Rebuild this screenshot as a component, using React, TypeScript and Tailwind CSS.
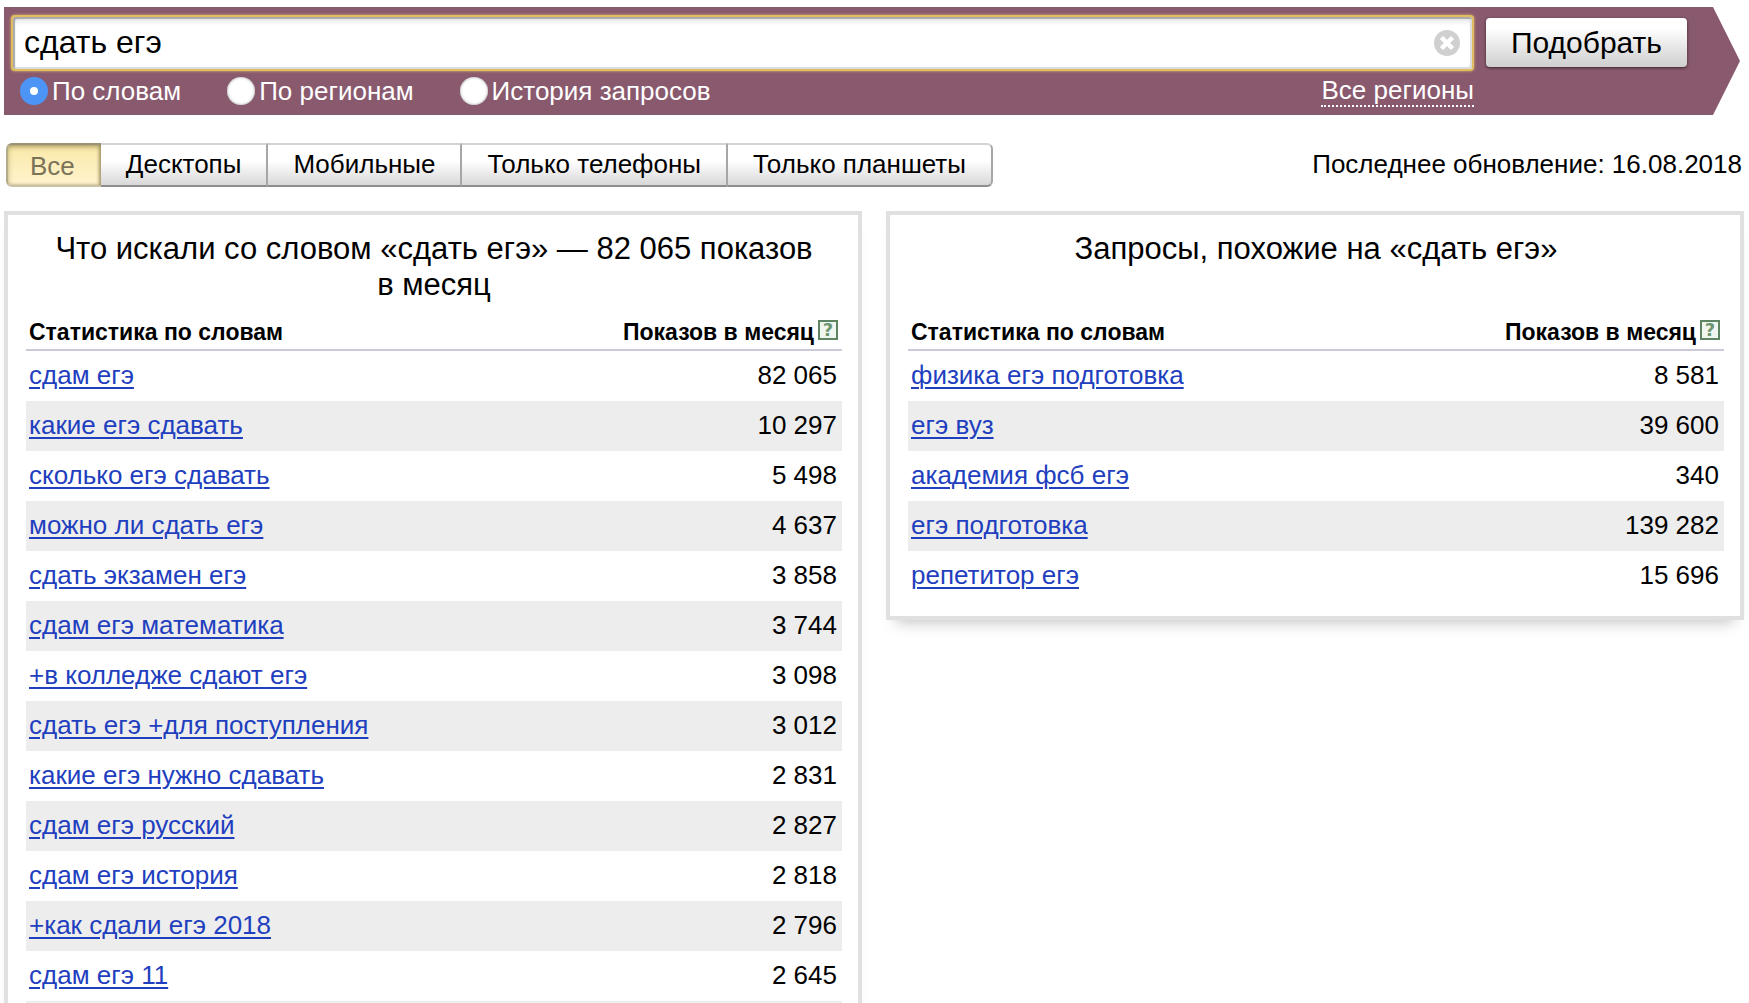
import React, { useState } from "react";

type Row = { query: string; shows: string };

const devices = ["Все", "Десктопы", "Мобильные", "Только телефоны", "Только планшеты"];
const modes = ["По словам", "По регионам", "История запросов"];

const searched: Row[] = [
  { query: "сдам егэ", shows: "82 065" },
  { query: "какие егэ сдавать", shows: "10 297" },
  { query: "сколько егэ сдавать", shows: "5 498" },
  { query: "можно ли сдать егэ", shows: "4 637" },
  { query: "сдать экзамен егэ", shows: "3 858" },
  { query: "сдам егэ математика", shows: "3 744" },
  { query: "+в колледже сдают егэ", shows: "3 098" },
  { query: "сдать егэ +для поступления", shows: "3 012" },
  { query: "какие егэ нужно сдавать", shows: "2 831" },
  { query: "сдам егэ русский", shows: "2 827" },
  { query: "сдам егэ история", shows: "2 818" },
  { query: "+как сдали егэ 2018", shows: "2 796" },
  { query: "сдам егэ 11", shows: "2 645" },
  { query: "", shows: "" },
];

const similar: Row[] = [
  { query: "физика егэ подготовка", shows: "8 581" },
  { query: "егэ вуз", shows: "39 600" },
  { query: "академия фсб егэ", shows: "340" },
  { query: "егэ подготовка", shows: "139 282" },
  { query: "репетитор егэ", shows: "15 696" },
];

function Panel({ title, rows }: { title: string; rows: Row[] }) {
  return (
    <section className="border-4 border-[#e0e0e0] bg-white pt-4 pr-4 pb-[15px] pl-[18px] shadow-[0_12px_14px_-10px_rgba(0,0,0,0.25)]">
      <h2 className="mx-auto min-h-[72px] max-w-[780px] text-center text-[31px] leading-9">{title}</h2>
      <table className="mt-3 w-full border-separate border-spacing-0">
        <thead>
          <tr className="text-[23px] leading-[34px]">
            <th className="border-b-2 border-[#cccad8] px-[3px] py-0 text-left font-bold">
              Статистика по словам
            </th>
            <th className="border-b-2 border-[#cccad8] py-0 pr-1 pl-0 font-bold">
              <div className="flex items-center justify-end gap-1">
                Показов в месяц
                <button
                  type="button"
                  aria-label="Справка"
                  className="mb-1 flex size-5 items-center justify-center border-2 border-[#5d8564] bg-[#f0f5f0] font-['DejaVu_Sans',sans-serif] text-lg leading-4 font-bold text-[#6c9672]"
                >
                  ?
                </button>
              </div>
            </th>
          </tr>
        </thead>
        <tbody className="text-[26px] leading-[30px]">
          {rows.map((row, i) => (
            <tr key={i} className="h-[50px] even:bg-[#ededed]">
              <td className="px-[3px] pt-0 pb-0.5">
                {row.query && (
                  <a href="#" className="text-[#1f3fbf] underline decoration-2 underline-offset-[3px]">
                    {row.query}
                  </a>
                )}
              </td>
              <td className="pt-0 pr-[5px] pb-0.5 text-right">{row.shows}</td>
            </tr>
          ))}
        </tbody>
      </table>
    </section>
  );
}

export default function App() {
  const [query, setQuery] = useState("сдать егэ");
  const [mode, setMode] = useState(0);
  const [device, setDevice] = useState(0);

  return (
    <div className="h-screen overflow-hidden bg-white pt-[7px] pr-[5px] pl-1 font-['Liberation_Sans',Arial,sans-serif] text-black">
      <header className="mr-1 flex h-[108px] gap-3 bg-[#89596e] pt-2 pr-[53px] pl-[7px] [clip-path:polygon(0_0,calc(100%-27px)_0,100%_50%,calc(100%-27px)_100%,0_100%)]">
        <div className="min-w-0 flex-1">
          <div className="flex h-14 items-center rounded-sm border-2 border-[#e0bd62] bg-white pr-3 shadow-[0_0_3px_#e0bd62,inset_2px_2px_1px_#a8a8a8,inset_-2px_-2px_0_#dcdcdc,inset_0_5px_5px_#e8e8e8]">
            <input
              type="text"
              aria-label="Поисковый запрос"
              value={query}
              onChange={(e) => setQuery(e.target.value)}
              className="min-w-0 flex-1 bg-transparent pb-0.5 pl-[11px] text-[32px] leading-9 outline-none"
            />
            <button type="button" aria-label="Очистить" onClick={() => setQuery("")}>
              <svg viewBox="0 0 26 26" className="size-[26px]">
                <circle cx="13" cy="13" r="13" fill="#d0d0d0" />
                <path d="M7.5 7.5l11 11M18.5 7.5l-11 11" stroke="white" strokeWidth="4.5" />
              </svg>
            </button>
          </div>
          <div className="flex items-center justify-between pt-1 pl-[9px] text-[26px] leading-[30px] text-white">
            <div className="flex gap-[46px]">
              {modes.map((label, i) => (
                <label key={label} className="flex items-center gap-1">
                  <input
                    type="radio"
                    name="mode"
                    checked={mode === i}
                    onChange={() => setMode(i)}
                    className="size-7 appearance-none rounded-full bg-white shadow-[inset_0_0_3px_#9a9a9a] checked:border-[10px] checked:border-[#4c94f6] checked:shadow-none"
                  />
                  {label}
                </label>
              ))}
            </div>
            <a href="#" className="border-b-2 border-dotted border-white">
              Все регионы
            </a>
          </div>
        </div>
        <button
          type="button"
          className="mt-[3px] h-[49px] rounded-sm bg-linear-to-b from-white from-20% to-[#cfcfcf] px-[25px] text-[30px] leading-9 shadow-[0_1px_3px_rgba(0,0,0,0.6)]"
        >
          Подобрать
        </button>
      </header>

      <div className="mt-7 mr-0.5 ml-0.5 flex items-center justify-between text-[26px] leading-[30px]">
        <div className="flex" role="group" aria-label="Устройства">
          {devices.map((label, i) => (
            <button
              key={label}
              type="button"
              aria-pressed={device === i}
              onClick={() => setDevice(i)}
              className={
                device === i
                  ? "h-11 border-2 border-r-0 border-t-[#9a9278] border-b-[#c9c2a4] border-l-[#b3ab8c] bg-linear-to-b from-[#fae9a8] to-[#fff3cd] pt-0.5 pr-[26px] pl-[22px] text-[#7a7358] shadow-[inset_0_2px_5px_rgba(120,105,60,0.5),inset_-2px_0_3px_rgba(120,105,60,0.5)] first:rounded-l-md"
                  : "h-11 border-t-2 border-r-2 border-b-2 border-t-[#d3d3d3] border-r-[#a6a6a6] border-b-[#8e8e8e] bg-linear-to-b from-white from-40% to-[#d8d8d8] px-[25px] pb-0.5 last:rounded-r-md"
              }
            >
              {label}
            </button>
          ))}
        </div>
        <p className="pb-0.5">Последнее обновление: 16.08.2018</p>
      </div>

      <main className="mt-6 grid grid-cols-2 items-start gap-6">
        <Panel title={"Что искали со словом «сдать егэ» — 82 065 показов в\u00a0месяц"} rows={searched} />
        <Panel title="Запросы, похожие на «сдать егэ»" rows={similar} />
      </main>
    </div>
  );
}
